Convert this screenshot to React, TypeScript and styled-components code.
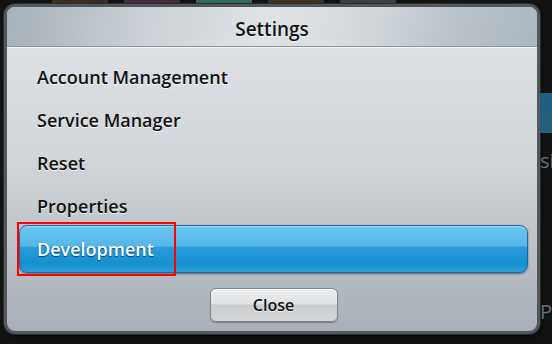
import React from "react";
import styled, { createGlobalStyle } from "styled-components";

const GlobalStyle = createGlobalStyle`
  html, body {
    margin: 0;
    padding: 0;
    background: #111213;
  }
  * {
    box-sizing: border-box;
  }
`;

const Screen = styled.div`
  width: 552px;
  height: 344px;
  overflow: hidden;
  display: flex;
  flex-direction: column;
  background: #121314;
  font-family: "Open Sans", "Liberation Sans", sans-serif;
`;

const TopStrip = styled.div`
  height: 4px;
  display: flex;
  gap: 16px;
  padding-left: 52px;
`;

const Thumb = styled.div<{ $tone: string }>`
  width: 56px;
  height: 100%;
  background: ${({ $tone }) => $tone};
`;

const Stage = styled.div`
  flex: 1;
  display: flex;
`;

const Panel = styled.div`
  width: 536px;
  height: 330px;
  margin-left: 4px;
  display: flex;
  flex-direction: column;
  border: 3px solid #55585b;
  border-radius: 11px;
  box-shadow: 0 0 0 1px #2a2b2c, 2px 3px 4px rgba(0, 0, 0, 0.6);
  overflow: hidden;
  background: linear-gradient(180deg, #e1e4e7 0%, #d3d7db 45%, #a8afb6 100%);
`;

const Header = styled.div`
  height: 40px;
  flex-shrink: 0;
  display: flex;
  align-items: center;
  justify-content: center;
  padding-top: 4px;
  background: linear-gradient(
    100deg,
    #a7b1b9 0%,
    #c9cfd4 25%,
    #e0e3e6 48%,
    #d9dde0 62%,
    #b9c2c9 85%,
    #aeb8c0 100%
  );
  border-bottom: 1px solid #8e969d;
  box-shadow: 0 1px 0 #f1f3f4;
`;

const Title = styled.h1`
  margin: 0;
  font-size: 19px;
  font-weight: 600;
  color: #141414;
  text-shadow: 0 1px 0 rgba(255, 255, 255, 0.6);
`;

const Menu = styled.ul`
  list-style: none;
  margin: 0;
  padding: 8px 9px 0 12px;
`;

const Row = styled.li<{ $selected?: boolean }>`
  position: relative;
  height: 43px;
  display: flex;
  align-items: center;
  padding-left: 18px;
  font-size: 18px;
  font-weight: 600;
  color: ${({ $selected }) => ($selected ? "#ffffff" : "#111111")};
  text-shadow: ${({ $selected }) =>
    $selected ? "0 1px 1px rgba(0, 40, 80, 0.8)" : "0 1px 0 rgba(255, 255, 255, 0.8)"};

  ${({ $selected }) =>
    $selected &&
    `
    height: 48px;
    margin: -2.5px 0;
    border: 1px solid #1c6aa3;
    border-radius: 8px;
    padding-left: 17px;
    background: linear-gradient(
      180deg,
      #6ac6f0 0%,
      #56b6e6 44%,
      #2a9ddb 46%,
      #1790d0 80%,
      #2b9fd8 100%
    );
    box-shadow: inset 0 1px 0 rgba(255, 255, 255, 0.35), 0 1px 2px rgba(0, 0, 0, 0.45);
  `}
`;

const Highlight = styled.span`
  position: absolute;
  left: -3px;
  top: -4px;
  width: 159px;
  height: 54px;
  border: 2px solid #ff0000;
  pointer-events: none;
`;

const Footer = styled.div`
  margin-top: auto;
  display: flex;
  justify-content: center;
  padding: 0 0 9px 3px;
`;

const CloseButton = styled.button`
  width: 128px;
  height: 34px;
  border: 1px solid #7f8488;
  border-radius: 6px;
  font-family: inherit;
  font-size: 16px;
  font-weight: 600;
  color: #111111;
  text-shadow: 0 1px 0 rgba(255, 255, 255, 0.7);
  background: linear-gradient(180deg, #eceeef 0%, #dfe1e3 46%, #c9ccce 50%, #d3d5d7 100%);
  box-shadow: inset 0 1px 0 #ffffff, 0 1px 1px rgba(0, 0, 0, 0.25);
  cursor: pointer;
`;

const Side = styled.div`
  flex: 1;
  display: flex;
  flex-direction: column;
  padding-top: 89px;
  gap: 14px;
  overflow: hidden;
`;

const SideTile = styled.div`
  height: 40px;
  background: linear-gradient(180deg, #1d5f7c 0%, #27627d 100%);
`;

const SideText = styled.div<{ $top?: number }>`
  color: #6d7073;
  font-size: 20px;
  margin-top: ${({ $top }) => $top ?? 0}px;
  white-space: nowrap;
`;

const items = [
  "Account Management",
  "Service Manager",
  "Reset",
  "Properties",
  "Development",
];

export default function App() {
  const selected = 4;
  return (
    <>
      <GlobalStyle />
      <Screen>
        <TopStrip>
          <Thumb $tone="#3a2d25" />
          <Thumb $tone="#4a2a3c" />
          <Thumb $tone="#2d6e61" />
          <Thumb $tone="#3c3226" />
          <Thumb $tone="#3a4046" />
        </TopStrip>
        <Stage>
          <Panel>
            <Header>
              <Title>Settings</Title>
            </Header>
            <Menu>
              {items.map((label, i) => (
                <Row key={label} $selected={i === selected}>
                  {label}
                  {i === selected && <Highlight />}
                </Row>
              ))}
            </Menu>
            <Footer>
              <CloseButton>Close</CloseButton>
            </Footer>
          </Panel>
          <Side>
            <SideTile />
            <SideText>si</SideText>
            <SideText $top={110}>PH</SideText>
          </Side>
        </Stage>
      </Screen>
    </>
  );
}
